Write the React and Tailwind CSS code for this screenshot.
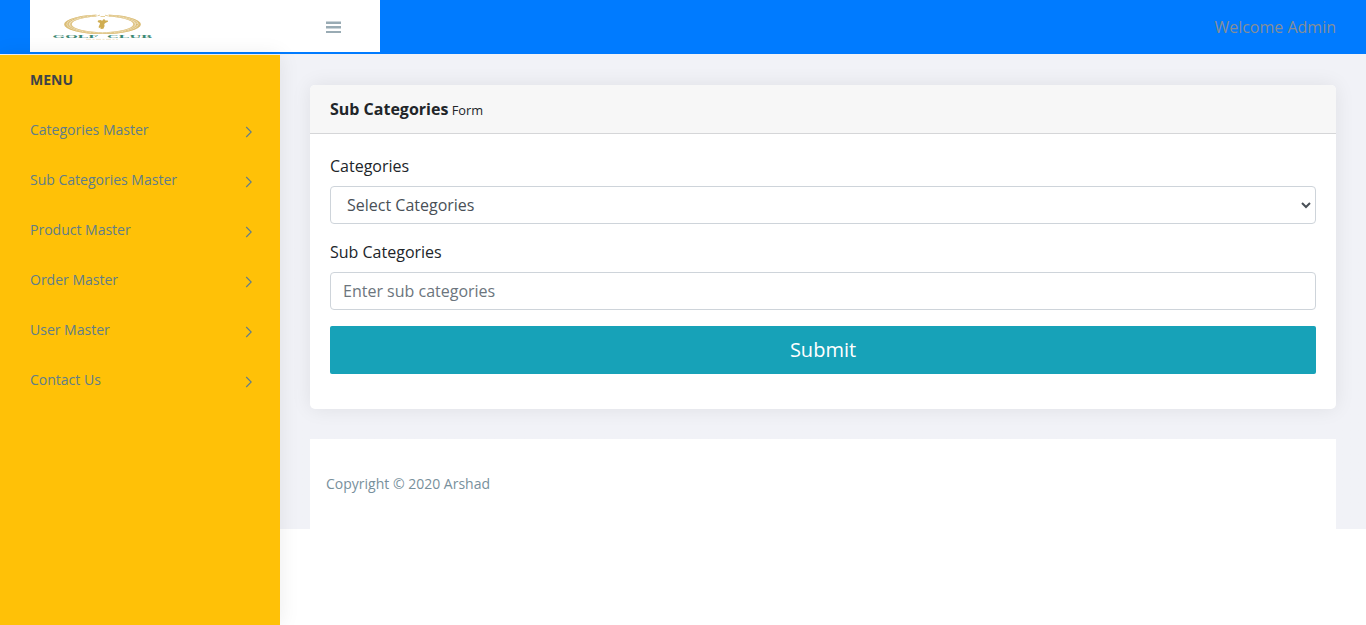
const menu = [
  'Categories Master',
  'Sub Categories Master',
  'Product Master',
  'Order Master',
  'User Master',
  'Contact Us',
];

function Logo() {
  return (
    <svg width="104" height="32" viewBox="0 0 104 32" role="img" aria-label="Golf Club">
      <g transform="translate(52.5 14.3) scale(1 .255)" fill="none">
        <circle r="34.6" stroke="#f0e2bf" strokeWidth="7.6" />
        <circle r="37.2" stroke="#dbbd76" strokeWidth="2.2" />
        <circle r="34.4" stroke="#d9ba70" strokeWidth="1.8" strokeDasharray="3 1.2" />
        <circle r="31.6" stroke="#dfc486" strokeWidth="1.6" />
      </g>
      <path d="M46.5 5.4h12" stroke="#fff" strokeWidth="3.6" />
      <path d="M47.5 5.8l2.5-.7M50.5 6.5h4.5M55 5.2l3 .7" stroke="#e6d09a" strokeWidth="1" />
      <path d="M48 10.4l2.4-.5 1.8.9 1.2-1.6 1.5.2.4 1.2 2.5-.2.2 1.4-2.3.9-1.5 1.4.4 1.9-1.2 2.8-2.8.1-.2-1.6-1.5 1-.2-1.9 1-1.8.3-1.6-2.3-1.1z" fill="#d0ad51" />
      <g transform="translate(2.5 28.1) scale(1 .44)">
        <text x="0" y="0" fontSize="10" textLength="46" lengthAdjust="spacingAndGlyphs" fill="#3a8873" className="font-['Liberation_Serif',serif] font-bold">GOLF</text>
        <text x="54.5" y="0" fontSize="10" textLength="45" lengthAdjust="spacingAndGlyphs" fill="#3a8873" className="font-['Liberation_Serif',serif] font-bold">CLUB</text>
      </g>
      <path d="M36 29.4h32" stroke="#f0e3c4" strokeWidth=".9" strokeDasharray="5 1.5 2 1.5" />
    </svg>
  );
}

export default function App() {
  return (
    <div className="flex h-[625px] flex-col overflow-hidden bg-white font-['Open_Sans',sans-serif] text-base text-[#212529]">
      <header className="flex h-[54px] shrink-0 items-start justify-between bg-[#007bff] px-[30px]">
        <div className="flex h-[52px] w-[350px] items-start justify-between bg-white pt-2.5 pr-[39px] pl-5">
          <Logo />
          <button type="button" aria-label="Toggle menu" className="mt-[11px] flex w-[15px] flex-col gap-[2px]">
            <span className="h-[3px] w-full border-t border-[#ccd5da] bg-[#99abb4]" />
            <span className="h-[3px] w-full border-b border-[#ccd5da] bg-[#99abb4]" />
            <span className="h-[2px] w-full bg-[#99abb4]" />
          </button>
        </div>
        <span className="leading-[54px] text-[#868e96]">Welcome Admin</span>
      </header>
      <div className="flex min-h-0 flex-1 items-start bg-linear-to-b from-[#f1f2f7] from-[475px] to-white to-[475px]">
        <aside className="mt-px h-[570px] w-[280px] shrink-0 bg-[#ffc107] px-[30px] text-sm shadow-[0_0_20px_rgba(0,0,0,0.08)]">
          <h3 className="h-[50px] leading-[50px] font-bold text-[#3e4347]">MENU</h3>
          <nav>
            {menu.map((label) => (
              <a key={label} className="flex h-[50px] items-center justify-between text-[#607d8b]">
                <span className="leading-[50px]">{label}</span>
                <svg width="8" height="12" viewBox="0 0 8 12" fill="none" stroke="currentColor" strokeWidth="1.1" className="mt-1 -mr-[3px]">
                  <path d="M1.2 1l5 5-5 5" />
                </svg>
              </a>
            ))}
          </nav>
        </aside>
        <main className="flex-1 px-[30px] pt-[31px]">
          <section className="h-[324px] rounded-[5px] bg-white shadow-[0_0_20px_rgba(0,0,0,0.08)]">
            <div className="h-[49px] rounded-t-[5px] border-b border-[#d5d6d8] bg-[#f7f7f7] px-5 leading-[48px]">
              <strong className="font-bold">Sub Categories</strong>
              <small className="text-[12.8px]"> Form</small>
            </div>
            <form className="flex flex-col px-5 pt-5">
              <label htmlFor="cat" className="mb-2 leading-6">Categories</label>
              <div className="grid grid-cols-1 items-center">
                <select id="cat" className="col-start-1 row-start-1 h-[38px] w-full appearance-none rounded border border-[#ced4da] bg-white px-4 py-1.5 text-[#495057]">
                  <option>Select Categories</option>
                </select>
                <svg width="10" height="8" viewBox="0 0 10 8" fill="none" stroke="#495057" strokeWidth="2" className="pointer-events-none col-start-1 row-start-1 mr-[5px] justify-self-end">
                  <path d="M1 2l4 4 4-4" />
                </svg>
              </div>
              <label htmlFor="sub" className="mt-4 mb-2 leading-6">Sub Categories</label>
              <input id="sub" placeholder="Enter sub categories" className="h-[38px] w-full rounded border border-[#ced4da] bg-white px-3 placeholder:text-[#6c757d]" />
              <button type="button" className="mt-4 h-12 w-full rounded-[2px] bg-[#17a2b8] text-xl text-white">Submit</button>
            </form>
          </section>
          <footer className="mt-[30px] h-[90px] bg-white px-4 text-sm leading-[90px] text-[#78909c]">Copyright © 2020 Arshad</footer>
        </main>
      </div>
    </div>
  );
}
